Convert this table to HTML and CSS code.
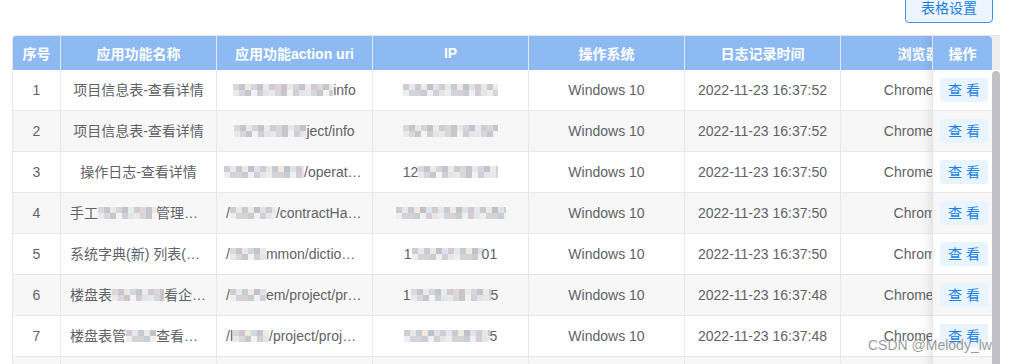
FILE: index.html
```html
<!DOCTYPE html>
<html lang="zh-CN">
<head>
<meta charset="utf-8">
<title>日志列表</title>
<link rel="stylesheet" href="styles.css">
</head>
<body>
<div class="toolbar">
  <button class="btn-settings">表格设置</button>
</div>
<div class="table-wrap">
  <div class="grid head">
    <div class="th">序号</div>
    <div class="th">应用功能名称</div>
    <div class="th">应用功能action uri</div>
    <div class="th">IP</div>
    <div class="th">操作系统</div>
    <div class="th">日志记录时间</div>
    <div class="th">浏览器</div>
  </div>

  <div class="grid row">
    <div class="td">1</div>
    <div class="td">项目信息表-查看详情</div>
    <div class="td"><span class="mz w100"></span>info</div>
    <div class="td"><span class="mz w95 alt"></span></div>
    <div class="td">Windows 10</div>
    <div class="td">2022-11-23 16:37:52</div>
    <div class="td">Chrome 99</div>
  </div>
  <div class="grid row">
    <div class="td">2</div>
    <div class="td">项目信息表-查看详情</div>
    <div class="td"><span class="mz w72"></span>ject/info</div>
    <div class="td"><span class="mz w95"></span></div>
    <div class="td">Windows 10</div>
    <div class="td">2022-11-23 16:37:52</div>
    <div class="td">Chrome 99</div>
  </div>
  <div class="grid row">
    <div class="td">3</div>
    <div class="td">操作日志-查看详情</div>
    <div class="td ell ell-tight"><span class="mz w80 alt"></span>/operationLog/info</div>
    <div class="td">12<span class="mz w80"></span></div>
    <div class="td">Windows 10</div>
    <div class="td">2022-11-23 16:37:50</div>
    <div class="td">Chrome 99</div>
  </div>
  <div class="grid row">
    <div class="td">4</div>
    <div class="td ell">手工<span class="mz w58"></span>管理查看详情</div>
    <div class="td ell">/<span class="mz w46 alt"></span>/contractHandle/info</div>
    <div class="td"><span class="mz w110 alt"></span></div>
    <div class="td">Windows 10</div>
    <div class="td">2022-11-23 16:37:50</div>
    <div class="td">Chrome</div>
  </div>
  <div class="grid row">
    <div class="td">5</div>
    <div class="td ell">系统字典(新) 列表(查询)</div>
    <div class="td ell">/<span class="mz w36"></span>mmon/dictionary/list</div>
    <div class="td">1<span class="mz w70 alt"></span>01</div>
    <div class="td">Windows 10</div>
    <div class="td">2022-11-23 16:37:50</div>
    <div class="td">Chrome</div>
  </div>
  <div class="grid row">
    <div class="td">6</div>
    <div class="td ell">楼盘表<span class="mz w52"></span>看企业信息</div>
    <div class="td ell">/<span class="mz w36 alt"></span>em/project/projectInfo</div>
    <div class="td">1<span class="mz w80"></span>5</div>
    <div class="td">Windows 10</div>
    <div class="td">2022-11-23 16:37:48</div>
    <div class="td">Chrome 99</div>
  </div>
  <div class="grid row">
    <div class="td">7</div>
    <div class="td ell">楼盘表管<span class="mz w30 alt"></span>查看企业信息</div>
    <div class="td ell">/l<span class="mz w36"></span>/project/projectInfo</div>
    <div class="td"><span class="mz w86 alt"></span>5</div>
    <div class="td">Windows 10</div>
    <div class="td">2022-11-23 16:37:48</div>
    <div class="td">Chrome 99</div>
  </div>
  <div class="grid row">
    <div class="td">8</div>
    <div class="td">项目信息表-查看详情</div>
    <div class="td">/project/info</div>
    <div class="td"><span class="mz w95"></span></div>
    <div class="td">Windows 10</div>
    <div class="td">2022-11-23 16:37:46</div>
    <div class="td">Chrome 99</div>
  </div>

  <div class="fixed-col">
    <div class="fth">操作</div>
    <div class="ftd"><button class="btn-view">查 看</button></div>
    <div class="ftd"><button class="btn-view">查 看</button></div>
    <div class="ftd"><button class="btn-view">查 看</button></div>
    <div class="ftd"><button class="btn-view">查 看</button></div>
    <div class="ftd"><button class="btn-view">查 看</button></div>
    <div class="ftd"><button class="btn-view">查 看</button></div>
    <div class="ftd"><button class="btn-view">查 看</button></div>
    <div class="ftd"><button class="btn-view">查 看</button></div>
  </div>

  <div class="vscroll">
    <div class="gutter"></div>
    <div class="thumb"></div>
  </div>
</div>
<div class="watermark">CSDN @Melody_lw</div>
</body>
</html>
```
FILE: styles.css
```css
* { box-sizing: border-box; }

html, body {
  margin: 0;
  padding: 0;
  background: #ffffff;
  overflow: hidden;
}

body {
  width: 1009px;
  height: 364px;
  font-family: "Liberation Sans", "Noto Sans CJK SC", sans-serif;
  font-size: 14px;
  color: #606266;
  position: relative;
}

.toolbar {
  height: 35px;
  display: flex;
  justify-content: flex-end;
  align-items: flex-start;
  padding-right: 16px;
}

.btn-settings {
  margin-top: -7px;
  width: 88px;
  height: 30px;
  padding: 0;
  border: 1px solid #3a93f2;
  border-radius: 4px;
  background: #ecf5ff;
  color: #1a7fe6;
  font-family: "Liberation Sans", "Noto Sans CJK SC", sans-serif;
  font-size: 14px;
  line-height: 28px;
}

.table-wrap {
  position: relative;
  margin-left: 12px;
  width: 988px;
  height: 329px;
  overflow: hidden;
  border-top: 1px solid #e4e6ea;
  border-left: 1px solid #e4e6ea;
  border-top-left-radius: 4px;
}

.grid {
  display: grid;
  grid-template-columns: 48px repeat(6, 156px);
}

.head {
  height: 34px;
  background: #8dbaf3;
}

.th {
  border-right: 1px solid #e3e8ef;
  color: #ffffff;
  font-weight: bold;
  font-size: 14px;
  display: flex;
  align-items: center;
  justify-content: center;
  white-space: nowrap;
  overflow: hidden;
}

.row {
  height: 41px;
  background: #ffffff;
}

.row:nth-child(odd) {
  background: #f7f7f7;
}

.td {
  border-right: 1px solid #e8e8e8;
  border-bottom: 1px solid #e8e8e8;
  padding: 0 9px;
  line-height: 40px;
  text-align: center;
  white-space: nowrap;
  overflow: hidden;
}

.td.ell {
  text-align: left;
  text-overflow: ellipsis;
}

.td.ell-tight {
  padding-left: 7px;
}

/* pixelated (mosaic) redaction */
.mz {
  display: inline-block;
  height: 12px;
  vertical-align: -1px;
  background:
    linear-gradient(90deg, #ddd7da 0 6px, #c9c5cc 6px 12px, #ece8e2 12px 18px, #cfd8e0 18px 24px, #c3c5c9 24px 30px, #e8ecef 30px 36px, #d6cbcc 36px 42px) 0 0 / 42px 6px repeat-x,
    linear-gradient(90deg, #ebe8ea 0 6px, #d3d9df 6px 12px, #cbc6c9 12px 18px, #f1f3f5 18px 24px, #d3ced6 24px 30px, #e2e6e9 30px 36px) 0 6px / 36px 6px repeat-x;
}

.mz.alt {
  background:
    linear-gradient(90deg, #d2ccd0 0 6px, #e6e8ea 6px 12px, #c7ccd3 12px 18px, #efe9e1 18px 24px, #bfc2c6 24px 30px, #dde3ea 30px 36px) 0 0 / 36px 6px repeat-x,
    linear-gradient(90deg, #eeeeee 0 6px, #cfd5dc 6px 12px, #d9d2d4 12px 18px, #c8cdd2 18px 24px, #eef1f4 24px 30px, #d5ced9 30px 36px, #e6e6e6 36px 42px) 0 6px / 42px 6px repeat-x;
}

.w30 { width: 30px; }
.w36 { width: 36px; }
.w46 { width: 46px; }
.w52 { width: 52px; }
.w58 { width: 58px; }
.w70 { width: 70px; }
.w72 { width: 72px; }
.w80 { width: 80px; }
.w86 { width: 86px; }
.w95 { width: 95px; }
.w100 { width: 100px; }
.w110 { width: 110px; }

/* fixed right column */
.fixed-col {
  position: absolute;
  top: 0;
  right: 8px;
  width: 60px;
  border-left: 1px solid #e6e6e6;
  box-shadow: -3px 0 8px rgba(0, 0, 0, 0.09);
  background: #ffffff;
}

.fth {
  height: 34px;
  background: #8dbaf3;
  color: #ffffff;
  font-weight: bold;
  display: flex;
  align-items: center;
  justify-content: center;
  border-top-right-radius: 4px;
}

.ftd {
  height: 41px;
  border-bottom: 1px solid #e8e8e8;
  background: #ffffff;
  display: flex;
  align-items: center;
  justify-content: flex-end;
  padding-right: 4px;
}

.ftd:nth-child(odd) {
  background: #f7f7f7;
}

.btn-view {
  width: 48px;
  height: 24px;
  padding: 0;
  border: none;
  border-radius: 4px;
  background: #e8f4ff;
  color: #1a7fe6;
  font-family: "Liberation Sans", "Noto Sans CJK SC", sans-serif;
  font-size: 14px;
  line-height: 24px;
}

/* vertical scrollbar */
.vscroll {
  position: absolute;
  top: 0;
  right: 0;
  width: 8px;
  height: 100%;
  display: flex;
  flex-direction: column;
  background: #ffffff;
}

.gutter {
  height: 34px;
  background: #eeeeee;
}

.thumb {
  flex: 1;
  background: #c1c1c5;
  border-radius: 4px 4px 0 0;
  margin-top: 1px;
}

.watermark {
  position: absolute;
  left: 868px;
  top: 337px;
  font-size: 14px;
  color: rgba(120, 120, 120, 0.75);
  white-space: nowrap;
  text-shadow: 0 0 1px rgba(255, 255, 255, 0.6);
}
```
